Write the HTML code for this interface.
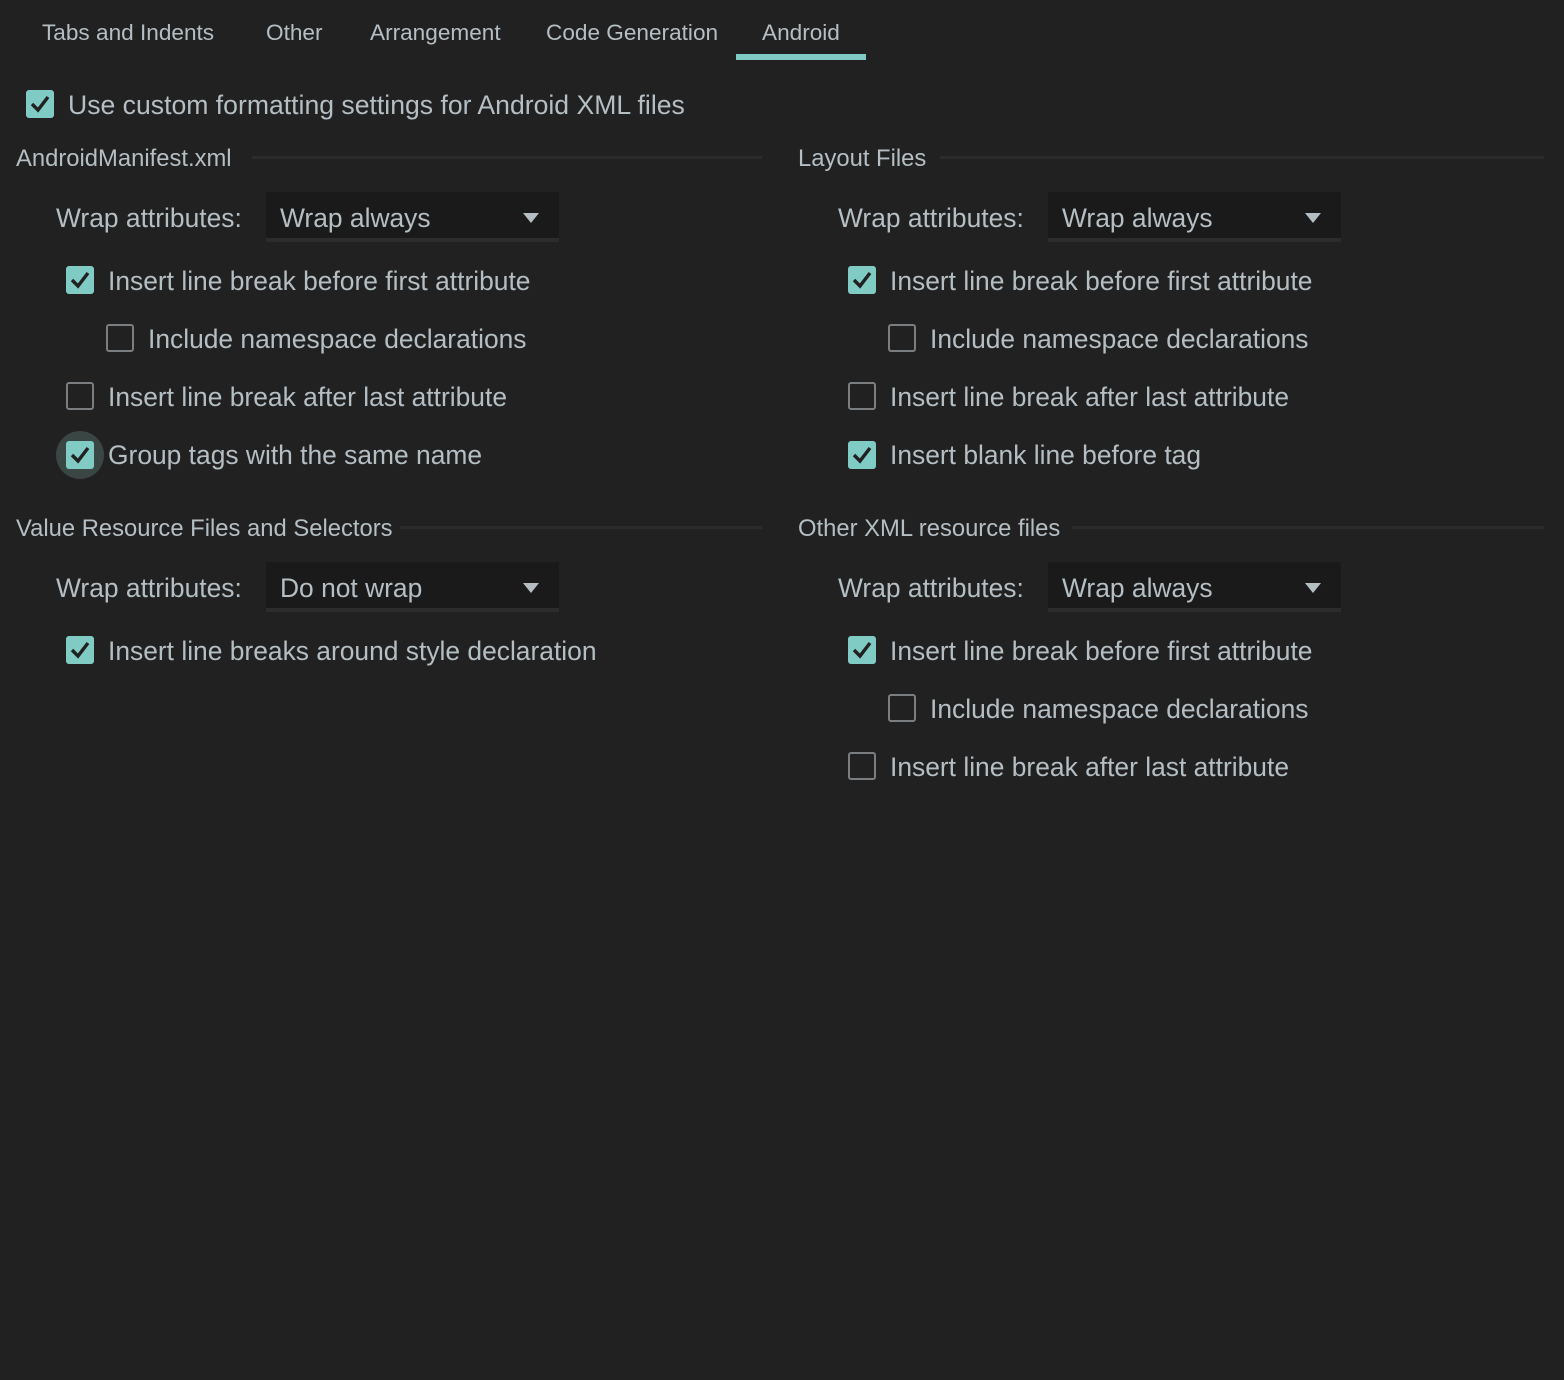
<!DOCTYPE html>
<html><head><meta charset="utf-8">
<style>
*{margin:0;padding:0;box-sizing:border-box}
html,body{width:1564px;height:1380px;background:#212121;overflow:hidden}
body{position:relative;font-family:"Liberation Sans",Arial,sans-serif;color:#b5bec3}
.t{position:absolute;white-space:nowrap;line-height:30px}
.tab{font-size:22.6px;top:18px}
.h{font-size:23.8px}
.i{font-size:26.4px}
.line{position:absolute;height:3px;background:#2b2b2b}
.cb{position:absolute;width:28px;height:28px;border-radius:3px}
.on{background:#80cbc4}
.off{border:2px solid #7a7e80}
.cb svg{position:absolute;left:3px;top:3px}
.dd{position:absolute;width:293px;height:50px;background:#1a1a1a;border-bottom:4px solid #2c2c2c}
.dd span{position:absolute;left:14px;top:11px;font-size:26.4px;line-height:30px}
.dd i{position:absolute;right:20px;top:21px;width:0;height:0;border-left:8px solid transparent;border-right:8px solid transparent;border-top:10px solid #b5bec3}
</style></head><body>
<div class="t tab" style="left:42px">Tabs and Indents</div>
<div class="t tab" style="left:266px">Other</div>
<div class="t tab" style="left:370px">Arrangement</div>
<div class="t tab" style="left:546px">Code Generation</div>
<div class="t tab" style="left:762px">Android</div>
<div style="position:absolute;left:736px;top:54px;width:130px;height:6px;background:#80cbc4"></div>

<div class="cb on" style="left:26px;top:90px"><svg width="22" height="22" viewBox="0 0 22 22"><path d="M3 11 L9 17 L19 4" fill="none" stroke="#212121" stroke-width="3.4"/></svg></div>
<div class="t" style="left:68px;top:90px;font-size:26.6px">Use custom formatting settings for Android XML files</div>

<div class="t h" style="left:16px;top:144px">AndroidManifest.xml</div>
<div class="line" style="left:252px;top:156px;width:510px"></div>
<div class="t i" style="left:56px;top:203px">Wrap attributes:</div>
<div class="dd" style="left:266px;top:192px"><span>Wrap always</span><i></i></div>

<div class="cb on" style="left:66px;top:266px"><svg width="22" height="22" viewBox="0 0 22 22"><path d="M3 11 L9 17 L19 4" fill="none" stroke="#212121" stroke-width="3.4"/></svg></div>
<div class="t i" style="left:108px;top:266px">Insert line break before first attribute</div>
<div class="cb off" style="left:106px;top:324px"></div>
<div class="t i" style="left:148px;top:324px">Include namespace declarations</div>
<div class="cb off" style="left:66px;top:382px"></div>
<div class="t i" style="left:108px;top:382px">Insert line break after last attribute</div>
<div style="position:absolute;left:56px;top:431px;width:48px;height:48px;border-radius:50%;background:#3a4644"></div>
<div class="cb on" style="left:66px;top:441px"><svg width="22" height="22" viewBox="0 0 22 22"><path d="M3 11 L9 17 L19 4" fill="none" stroke="#212121" stroke-width="3.4"/></svg></div>
<div class="t i" style="left:108px;top:440px">Group tags with the same name</div>

<div class="t h" style="left:16px;top:514px">Value Resource Files and Selectors</div>
<div class="line" style="left:400px;top:526px;width:362px"></div>
<div class="t i" style="left:56px;top:573px">Wrap attributes:</div>
<div class="dd" style="left:266px;top:562px"><span>Do not wrap</span><i></i></div>
<div class="cb on" style="left:66px;top:636px"><svg width="22" height="22" viewBox="0 0 22 22"><path d="M3 11 L9 17 L19 4" fill="none" stroke="#212121" stroke-width="3.4"/></svg></div>
<div class="t i" style="left:108px;top:636px">Insert line breaks around style declaration</div>

<div class="t h" style="left:798px;top:144px">Layout Files</div>
<div class="line" style="left:940px;top:156px;width:604px"></div>
<div class="t i" style="left:838px;top:203px">Wrap attributes:</div>
<div class="dd" style="left:1048px;top:192px"><span>Wrap always</span><i></i></div>
<div class="cb on" style="left:848px;top:266px"><svg width="22" height="22" viewBox="0 0 22 22"><path d="M3 11 L9 17 L19 4" fill="none" stroke="#212121" stroke-width="3.4"/></svg></div>
<div class="t i" style="left:890px;top:266px">Insert line break before first attribute</div>
<div class="cb off" style="left:888px;top:324px"></div>
<div class="t i" style="left:930px;top:324px">Include namespace declarations</div>
<div class="cb off" style="left:848px;top:382px"></div>
<div class="t i" style="left:890px;top:382px">Insert line break after last attribute</div>
<div class="cb on" style="left:848px;top:441px"><svg width="22" height="22" viewBox="0 0 22 22"><path d="M3 11 L9 17 L19 4" fill="none" stroke="#212121" stroke-width="3.4"/></svg></div>
<div class="t i" style="left:890px;top:440px">Insert blank line before tag</div>

<div class="t h" style="left:798px;top:514px">Other XML resource files</div>
<div class="line" style="left:1072px;top:526px;width:472px"></div>
<div class="t i" style="left:838px;top:573px">Wrap attributes:</div>
<div class="dd" style="left:1048px;top:562px"><span>Wrap always</span><i></i></div>
<div class="cb on" style="left:848px;top:636px"><svg width="22" height="22" viewBox="0 0 22 22"><path d="M3 11 L9 17 L19 4" fill="none" stroke="#212121" stroke-width="3.4"/></svg></div>
<div class="t i" style="left:890px;top:636px">Insert line break before first attribute</div>
<div class="cb off" style="left:888px;top:694px"></div>
<div class="t i" style="left:930px;top:694px">Include namespace declarations</div>
<div class="cb off" style="left:848px;top:752px"></div>
<div class="t i" style="left:890px;top:752px">Insert line break after last attribute</div>
</body></html>
